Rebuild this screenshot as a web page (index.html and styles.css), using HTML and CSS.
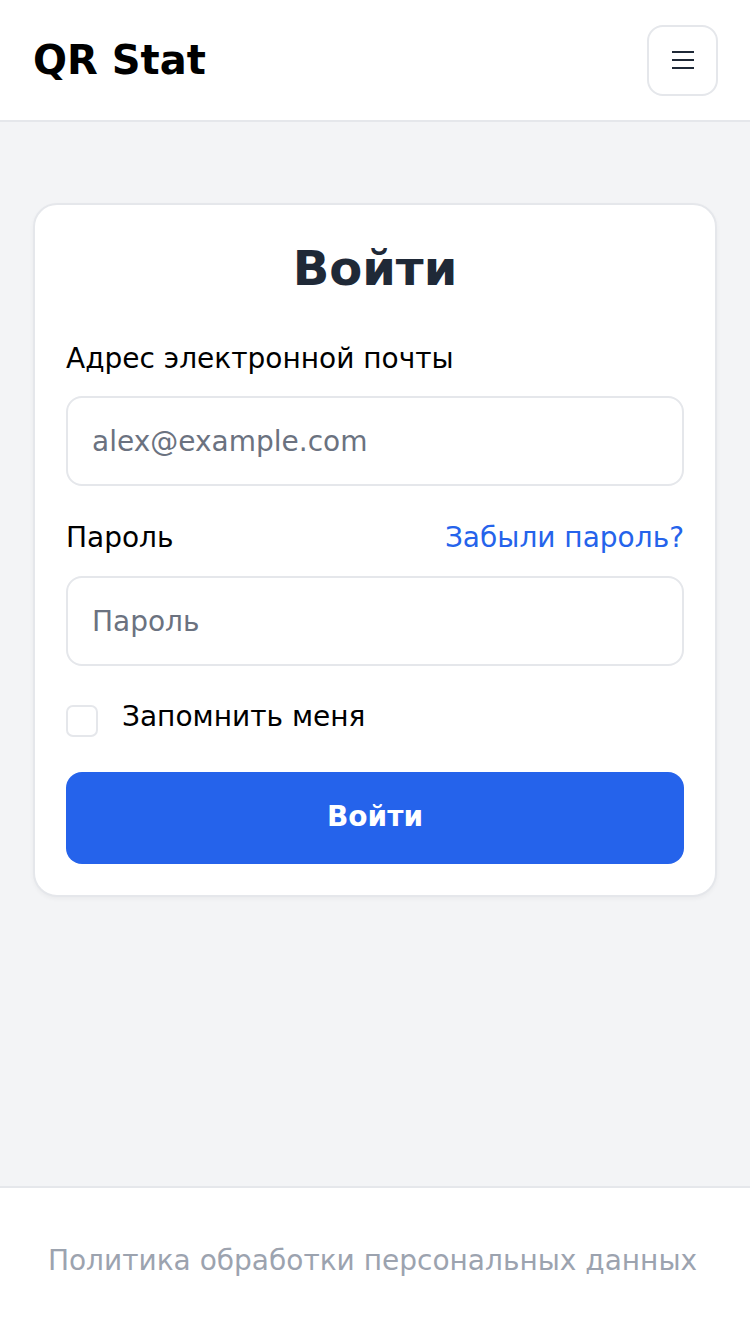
FILE: index.html
```html
<!DOCTYPE html>
<html lang="ru">
<head>
<meta charset="utf-8">
<title>QR Stat — Войти</title>
<link rel="stylesheet" href="styles.css">
</head>
<body>
<div class="page">
  <header class="header">
    <div class="brand">QR Stat</div>
    <button class="menu-btn" type="button" aria-label="Меню">
      <svg width="22" height="18" viewBox="0 0 22 18" fill="none" stroke="#1f2937" stroke-width="2">
        <line x1="0" y1="1" x2="22" y2="1"/>
        <line x1="0" y1="9" x2="22" y2="9"/>
        <line x1="0" y1="17" x2="22" y2="17"/>
      </svg>
    </button>
  </header>
  <main class="main">
    <form class="card">
      <h1 class="title">Войти</h1>
      <label class="label label-email" for="email">Адрес электронной почты</label>
      <input class="field" id="email" type="email" placeholder="alex@example.com">
      <div class="label-row">
        <label class="label" for="password">Пароль</label>
        <a class="link" href="#">Забыли пароль?</a>
      </div>
      <input class="field" id="password" type="password" placeholder="Пароль">
      <label class="remember">
        <input class="check" type="checkbox">
        <span>Запомнить меня</span>
      </label>
      <button class="submit" type="button">Войти</button>
    </form>
  </main>
  <footer class="footer">
    <a class="policy" href="#">Политика обработки персональных данных</a>
  </footer>
</div>
</body>
</html>
```
FILE: styles.css
```css
* { box-sizing: border-box; }
html, body { margin: 0; padding: 0; }
body {
  font-family: "DejaVu Sans", "Noto Sans", sans-serif;
  color: #000;
  background: #fff;
}
.page {
  min-height: 1334px;
  display: flex;
  flex-direction: column;
}
.header {
  height: 122px;
  display: flex;
  align-items: center;
  justify-content: space-between;
  padding: 0 32px 0 33px;
  background: #fff;
  border-bottom: 2px solid #e5e7eb;
}
.brand {
  font-size: 40px;
  font-weight: 700;
  color: #000;
  line-height: 1;
}
.menu-btn {
  width: 71px;
  height: 71px;
  border: 2px solid #e5e7eb;
  border-radius: 16px;
  background: #fff;
  display: flex;
  align-items: center;
  justify-content: center;
  padding: 0;
}
.menu-btn svg { display: block; }
.main {
  flex: 1;
  background: #f3f4f6;
  padding: 81px 33px 0 33px;
}
.card {
  background: #fff;
  border: 2px solid #e5e7eb;
  border-radius: 24px;
  padding: 31px 31px 31px 31px;
  box-shadow: 0 2px 4px rgba(0,0,0,0.04);
  display: flex;
  flex-direction: column;
}
.title {
  margin: 0 0 39px;
  font-size: 48px;
  line-height: 64px;
  font-weight: 700;
  color: #1f2937;
  text-align: center;
}
.label {
  font-size: 28px;
  line-height: 40px;
  color: #000;
}
.label-email { margin-bottom: 17px; }
.label-row {
  display: flex;
  justify-content: space-between;
  align-items: center;
  margin-top: 32px;
  margin-bottom: 18px;
}
.link {
  font-size: 28px;
  line-height: 40px;
  color: #2563eb;
  text-decoration: none;
}
.field {
  width: 100%;
  height: 90px;
  border: 2px solid #e5e7eb;
  border-radius: 16px;
  padding: 0 24px;
  font-family: inherit;
  font-size: 28px;
  color: #111827;
  background: #fff;
  outline: none;
}
.field::placeholder { color: #6b7280; opacity: 1; }
.remember {
  display: flex;
  align-items: flex-start;
  gap: 24px;
  margin-top: 31px;
  font-size: 28px;
  line-height: 40px;
  color: #000;
}
.check {
  appearance: none;
  -webkit-appearance: none;
  width: 32px;
  height: 32px;
  margin: 8px 0 0 0;
  border: 2px solid #e5e7eb;
  border-radius: 7px;
  background: #fff;
  flex: none;
}
.submit {
  margin-top: 35px;
  height: 92px;
  border: none;
  border-radius: 16px;
  background: #2563eb;
  color: #fff;
  font-family: inherit;
  font-size: 28px;
  font-weight: 700;
  padding: 0 0 4px;
}
.footer {
  height: 148px;
  border-top: 2px solid #e5e7eb;
  background: #fff;
  display: flex;
  align-items: center;
  justify-content: center;
  padding-right: 5px;
}
.policy {
  font-size: 28px;
  line-height: 40px;
  color: #9ca3af;
  text-decoration: none;
}
```
